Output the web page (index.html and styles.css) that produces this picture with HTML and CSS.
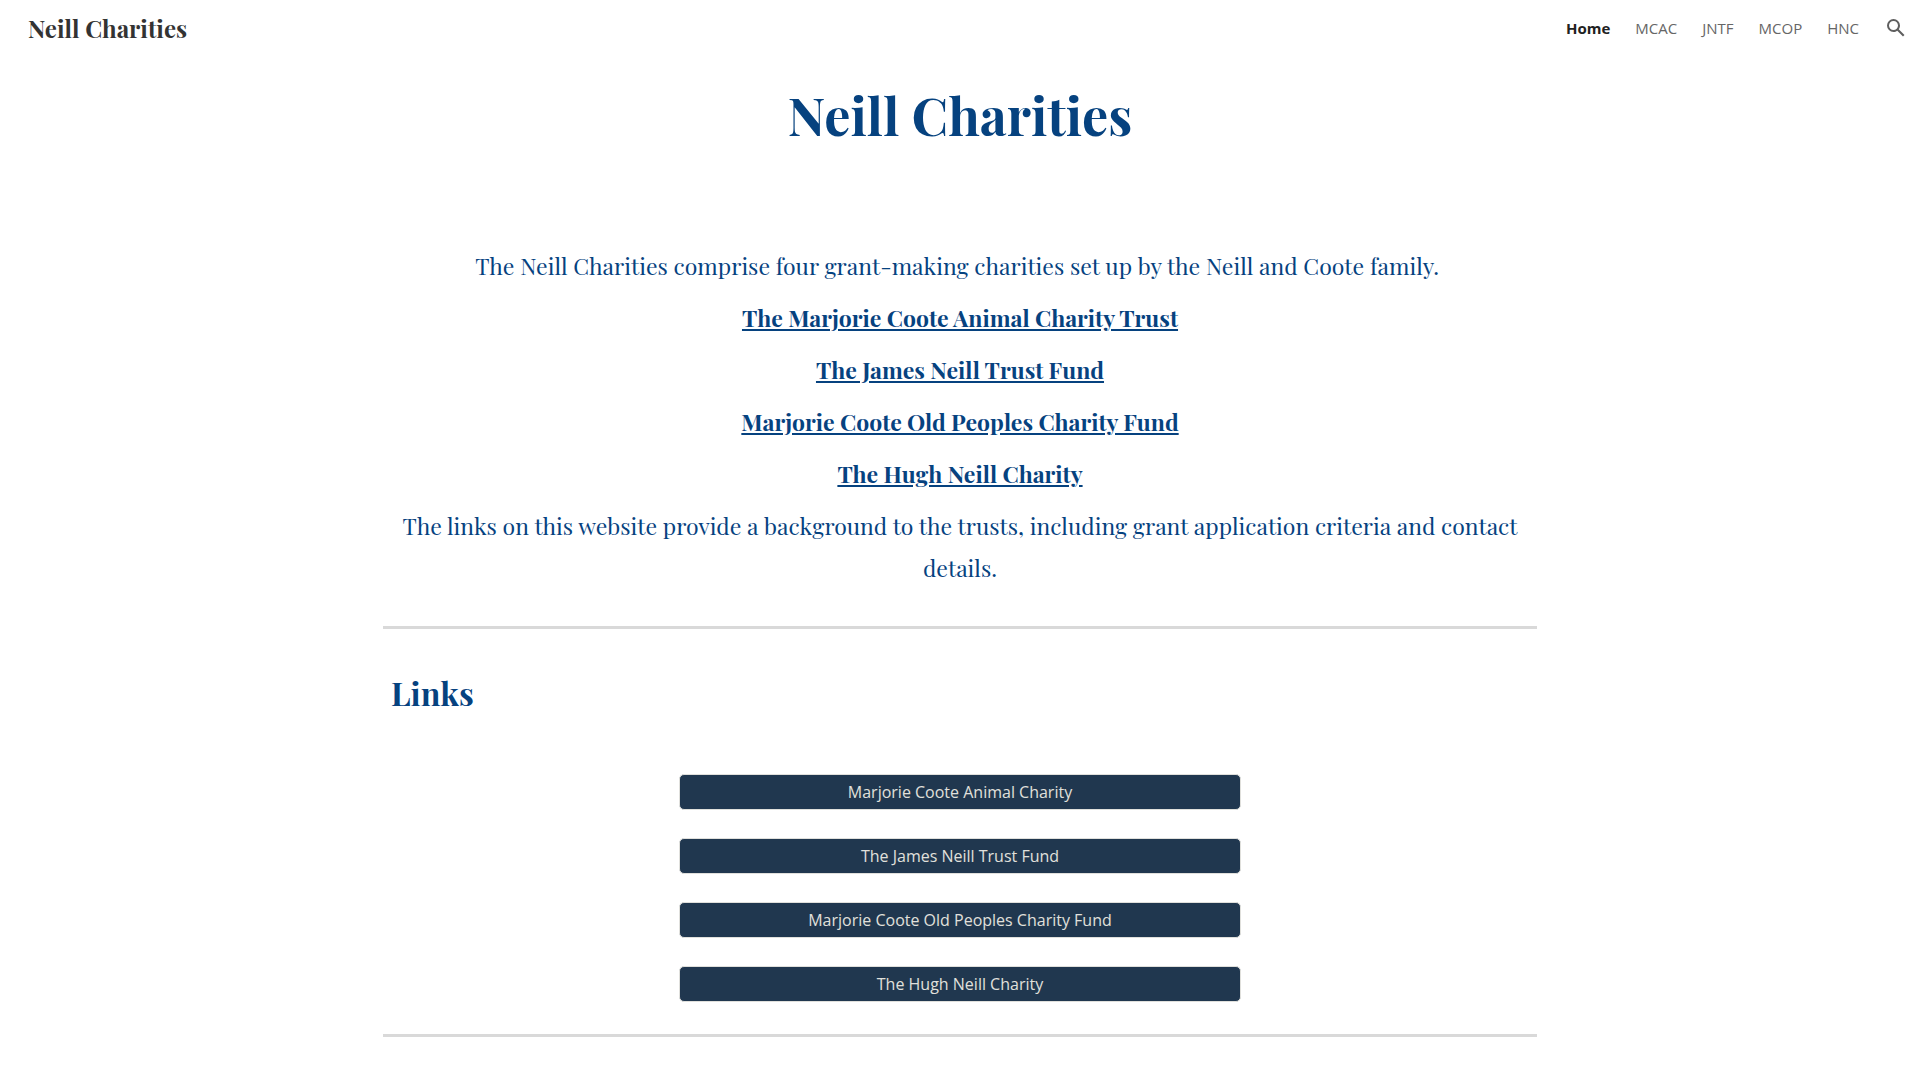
FILE: index.html
```html
<!DOCTYPE html>
<html lang="en">
<head>
  <meta charset="utf-8">
  <meta name="viewport" content="width=device-width, initial-scale=1">
  <title>Neill Charities</title>
  <link rel="stylesheet" href="styles.css">
</head>
<body>
  <header class="site-header">
    <a class="site-name" href="#">Neill Charities</a>
    <nav class="site-nav" aria-label="Main">
      <a class="nav-link nav-link-current" href="#" aria-current="page">Home</a>
      <a class="nav-link" href="#mcac">MCAC</a>
      <a class="nav-link" href="#jntf">JNTF</a>
      <a class="nav-link" href="#mcop">MCOP</a>
      <a class="nav-link" href="#hnc">HNC</a>
      <button class="search-button" type="button" aria-label="Open search bar">
        <svg class="search-icon" viewBox="0 0 24 24" aria-hidden="true"><path fill="currentColor" d="M20.49 19l-5.73-5.73C15.53 12.2 16 10.91 16 9.5A6.5 6.5 0 1 0 9.5 16c1.41 0 2.7-.47 3.77-1.24L19 20.49 20.49 19zM5 9.5C5 7.01 7.01 5 9.5 5S14 7.01 14 9.5 11.99 14 9.5 14 5 11.99 5 9.5z"/></svg>
      </button>
    </nav>
  </header>
  <main class="page">
    <h1 class="page-title">Neill Charities</h1>
    <section class="intro">
      <p class="intro-text">The Neill Charities comprise four grant-making charities set up by the Neill and Coote family.&nbsp;</p>
      <p class="intro-text"><a class="intro-link" href="#mcac">The Marjorie Coote Animal Charity Trust</a></p>
      <p class="intro-text"><a class="intro-link" href="#jntf">The James Neill Trust Fund</a></p>
      <p class="intro-text"><a class="intro-link" href="#mcop">Marjorie Coote Old Peoples Charity Fund</a></p>
      <p class="intro-text"><a class="intro-link" href="#hnc">The Hugh Neill Charity</a></p>
      <p class="intro-text">The links on this website provide a background to the trusts, including grant application criteria and contact details.</p>
    </section>
    <hr class="divider">
    <section class="links">
      <h2 class="links-title">Links</h2>
      <div class="link-list">
        <a class="link-button" href="#mcac">Marjorie Coote Animal Charity</a>
        <a class="link-button" href="#jntf">The James Neill Trust Fund</a>
        <a class="link-button" href="#mcop">Marjorie Coote Old Peoples Charity Fund</a>
        <a class="link-button" href="#hnc">The Hugh Neill Charity</a>
      </div>
    </section>
    <hr class="divider">
  </main>
</body>
</html>
```
FILE: styles.css
```css
* {
  box-sizing: border-box;
}

body {
  margin: 0;
  background: #fff;
  color: #06427f;
  font-family: "Playfair Display", "Liberation Serif", serif;
}

.site-header {
  display: flex;
  align-items: center;
  justify-content: space-between;
  height: 56px;
  padding: 0 12px 0 28px;
}

.site-name {
  color: #333;
  font-size: 24px;
  font-weight: 700;
  line-height: 32px;
  text-decoration: none;
}

.site-nav {
  display: flex;
  align-items: center;
  gap: 25px;
  font-family: "Open Sans", sans-serif;
  font-size: 15px;
  line-height: 24px;
}

.nav-link {
  color: #666;
  text-decoration: none;
}

.nav-link-current {
  color: #212121;
  font-weight: 700;
}

.search-button {
  display: flex;
  padding: 0;
  border: 0;
  background: none;
  color: #5f5f5f;
}

.search-icon {
  width: 24px;
  height: 24px;
}

.page {
  max-width: 1154px;
  margin: 0 auto;
}

.page-title {
  margin: 0;
  padding: 20px 8px;
  font-size: 52px;
  font-weight: 700;
  line-height: 78px;
  text-align: center;
}

.intro {
  padding: 71px 16px 37px;
  font-size: 23px;
  line-height: 42px;
  text-align: center;
}

.intro-text {
  margin: 0 0 10px;
}

.intro-text:last-child {
  margin: 0;
}

.intro-link {
  color: inherit;
  font-weight: 700;
}

.divider {
  height: 3px;
  margin: 0;
  border: 0;
  background: #d9d9d9;
}

.links {
  padding: 40px 8px 32px;
}

.links-title {
  margin: 0 0 57px;
  font-size: 32px;
  font-weight: 700;
  line-height: 48px;
}

.link-list {
  display: flex;
  flex-direction: column;
  gap: 28px;
  max-width: 562px;
  margin: 0 auto;
}

.link-button {
  padding: 5px 16px;
  border: 1px solid #e0e0dc;
  border-radius: 5px;
  background: #20374f;
  color: #e0e0dc;
  font-family: "Open Sans", sans-serif;
  font-size: 16px;
  line-height: 24px;
  text-align: center;
  text-decoration: none;
}
```
